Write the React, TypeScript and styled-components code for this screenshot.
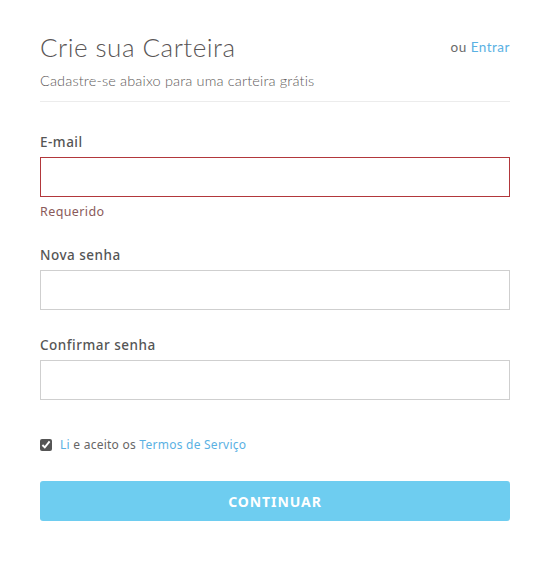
import React, { useState } from "react";
import styled, { createGlobalStyle } from "styled-components";

const GlobalStyle = createGlobalStyle`
  html, body {
    margin: 0;
    padding: 0;
    background: #fff;
  }
  body {
    font-family: "Lato", "Open Sans", sans-serif;
    color: #555;
  }
`;

const Page = styled.div`
  width: 470px;
  padding: 30px 40px 40px;
`;

const Header = styled.div`
  display: flex;
  justify-content: space-between;
  align-items: center;
`;

const Title = styled.h1`
  margin: 0;
  font-family: "Lato", sans-serif;
  font-weight: 300;
  font-size: 26px;
  letter-spacing: 0.5px;
  line-height: 34px;
  color: #5a5656;
`;

const SignIn = styled.div`
  font-family: "Lato", sans-serif;
  font-size: 13.5px;
  letter-spacing: 0.5px;
  color: #6a6a6a;
`;

const Link = styled.a`
  color: #5ab1e3;
  text-decoration: none;
  cursor: pointer;
`;

const Subtitle = styled.p`
  margin: 7px 0 0;
  font-family: "Lato", sans-serif;
  font-weight: 300;
  font-size: 14.5px;
  letter-spacing: 0.15px;
  line-height: 20px;
  color: #5e5a5a;
  padding-bottom: 10px;
  border-bottom: 1px solid #ececec;
`;

const Form = styled.form`
  display: flex;
  flex-direction: column;
  padding-top: 30px;
`;

const Field = styled.div<{ $gap: number }>`
  display: flex;
  flex-direction: column;
  margin-bottom: ${(p) => p.$gap}px;
`;

const Label = styled.label`
  font-family: "Noto Sans", sans-serif;
  font-weight: 500;
  font-size: 13.5px;
  letter-spacing: 0.5px;
  line-height: 20px;
  color: #555;
  margin-bottom: 5px;
`;

const Input = styled.input<{ $error?: boolean }>`
  box-sizing: border-box;
  height: 40px;
  width: 100%;
  border: 1px solid ${(p) => (p.$error ? "#b2373b" : "#cfcfcf")};
  outline: none;
  padding: 0 12px;
  font-size: 14px;
  background: #fff;
`;

const Hint = styled.span`
  margin-top: 5px;
  font-family: "Noto Sans", sans-serif;
  font-size: 12.5px;
  letter-spacing: 0.4px;
  line-height: 20px;
  color: #8a5a5a;
`;

const Terms = styled.label`
  display: flex;
  align-items: center;
  gap: 8px;
  font-family: "Noto Sans", sans-serif;
  font-size: 12px;
  letter-spacing: 0.25px;
  line-height: 20px;
  color: #666;
  margin-bottom: 26px;
`;

const Check = styled.input`
  margin: 0;
  width: 12px;
  height: 12px;
  accent-color: #555;
`;

const Submit = styled.button`
  height: 40px;
  width: 100%;
  border: none;
  border-radius: 3px;
  background: #6ecdf0;
  color: #fff;
  font-family: "Noto Sans", sans-serif;
  font-weight: 700;
  font-size: 14px;
  letter-spacing: 0.9px;
  cursor: pointer;
`;

export default function App() {
  const [agreed, setAgreed] = useState(true);
  return (
    <>
      <GlobalStyle />
      <Page>
        <Header>
          <Title>Crie sua Carteira</Title>
          <SignIn>
            ou <Link>Entrar</Link>
          </SignIn>
        </Header>
        <Subtitle>Cadastre-se abaixo para uma carteira grátis</Subtitle>
        <Form onSubmit={(e) => e.preventDefault()}>
          <Field $gap={23}>
            <Label>E-mail</Label>
            <Input $error type="email" />
            <Hint>Requerido</Hint>
          </Field>
          <Field $gap={25}>
            <Label>Nova senha</Label>
            <Input type="password" />
          </Field>
          <Field $gap={35}>
            <Label>Confirmar senha</Label>
            <Input type="password" />
          </Field>
          <Terms>
            <Check
              type="checkbox"
              checked={agreed}
              onChange={(e) => setAgreed(e.target.checked)}
            />
            <span>
              <Link>Li</Link> e aceito os <Link>Termos de Serviço</Link>
            </span>
          </Terms>
          <Submit type="submit">CONTINUAR</Submit>
        </Form>
      </Page>
    </>
  );
}
